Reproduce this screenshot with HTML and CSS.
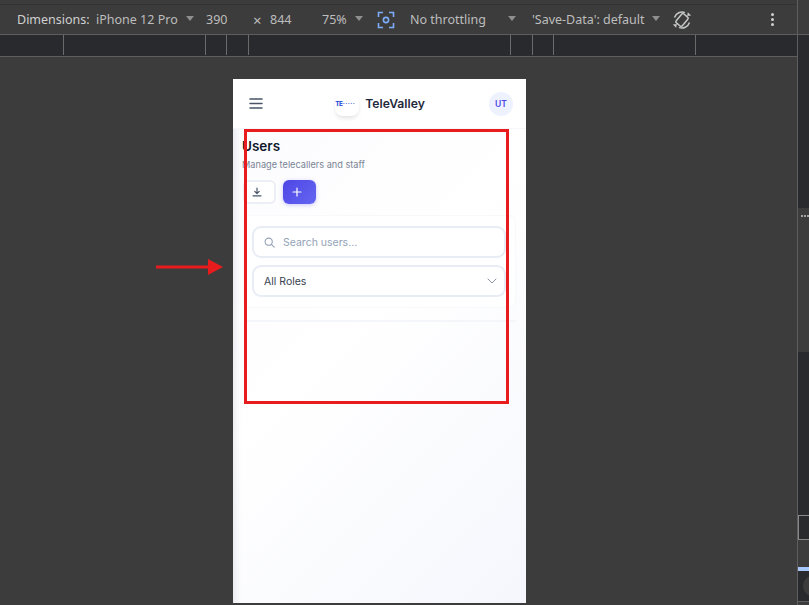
FILE: index.html
```html
<!DOCTYPE html>
<html>
<head>
  <title>Users - TeleValley</title>
  <meta charset="UTF-8">
  <link rel="stylesheet" href="styles.css">
</head>
<body>

<div class="devtools">
  <div class="main-col">
    <div class="top-strip"></div>

    <div class="toolbar">
      <span class="dim-label">Dimensions:</span>
      <span class="device">iPhone 12 Pro</span>
      <i class="caret caret-device"></i>
      <span class="size-w">390</span>
      <span class="size-x">×</span>
      <span class="size-h">844</span>
      <span class="zoom-val">75%</span>
      <i class="caret caret-zoom"></i>
      <svg class="sensor-icon" width="18" height="18" viewBox="0 0 18 18" fill="none" stroke="#7cacf8" stroke-width="1.6">
        <path d="M1.5 6V1.5H6M12 1.5h4.5V6M16.5 12v4.5H12M6 16.5H1.5V12"/>
        <circle cx="9" cy="9" r="2.6"/>
      </svg>
      <span class="throttle">No throttling</span>
      <i class="caret caret-throttle"></i>
      <span class="save-data">'Save-Data': default</span>
      <i class="caret caret-save"></i>
      <svg class="rotate-icon" width="22" height="22" viewBox="0 0 22 22" fill="none" stroke="#c4c7c5">
        <rect x="7" y="5.2" width="8" height="11.6" rx="1.6" transform="rotate(40 11 11)" stroke-width="1.5"/>
        <path d="M3.5 8.5A8 8 0 0 1 14 3.6M18.5 13.5A8 8 0 0 1 8 18.4" stroke-width="1.5"/>
        <path d="M1.8 15.5l3.4 3.2.6-3.8zM20.2 6.5l-3.4-3.2-.6 3.8z" fill="#c4c7c5" stroke="none"/>
      </svg>
      <span class="more-dots"><i></i><i></i><i></i></span>
    </div>

    <div class="ruler">
      <span></span><span></span><span></span><span></span>
      <span></span><span></span><span></span><span></span><span></span>
    </div>

    <div class="canvas">
      <div class="phone">
        <header class="app-header">
          <svg class="menu-icon" width="14" height="11" viewBox="0 0 14 11" fill="none" stroke="#475569" stroke-width="1.5" stroke-linecap="round">
            <path d="M1 1h12M1 5.5h12M1 10h12"/>
          </svg>
          <div class="brand">
            <div class="logo"><span class="logo-mark">TE</span><span class="logo-dots">·····</span></div>
            <span class="brand-name">TeleValley</span>
          </div>
          <div class="avatar">UT</div>
        </header>

        <main class="content">
          <h1>Users</h1>
          <p class="subtitle">Manage telecallers and staff</p>
          <div class="actions">
            <button class="btn btn-light" type="button">
              <svg width="10" height="10" viewBox="0 0 10 10" fill="none" stroke="#475569" stroke-width="1.2" stroke-linecap="round" stroke-linejoin="round">
                <path d="M5 1v5.5M2.8 4.4 5 6.6l2.2-2.2M1 8.8h8"/>
              </svg>
            </button>
            <button class="btn btn-primary" type="button">
              <svg width="10" height="10" viewBox="0 0 10 10" fill="none" stroke="#fff" stroke-width="1.2" stroke-linecap="round">
                <path d="M5 1v8M1 5h8"/>
              </svg>
            </button>
          </div>

          <section class="filter-card">
            <div class="field">
              <svg width="11" height="11" viewBox="0 0 11 11" fill="none" stroke="#94a3b8" stroke-width="1.1" stroke-linecap="round">
                <circle cx="4.7" cy="4.7" r="3.6"/>
                <path d="m7.4 7.4 2.8 2.8"/>
              </svg>
              <span class="placeholder">Search users...</span>
            </div>
            <div class="field field-select">
              <span>All Roles</span>
              <svg width="10" height="6" viewBox="0 0 10 6" fill="none" stroke="#7a8699" stroke-width="0.9" stroke-linecap="round" stroke-linejoin="round">
                <path d="m1 1 4 4 4-4"/>
              </svg>
            </div>
          </section>

          <div class="list-card"></div>
        </main>
      </div>

      <div class="mark-box"></div>
      <svg class="mark-arrow" width="67" height="16" viewBox="0 0 67 16">
        <path d="M0 6.5h52V0l15 8-15 8V9.5H0z" fill="#e81c1c"/>
      </svg>
    </div>
  </div>

  <aside class="side-col">
    <div class="side-head"></div>
    <div class="side-top"></div>
    <div class="side-tabs"><i></i><i></i><i></i></div>
    <div class="side-dark">
      <div class="side-box"></div>
    </div>
    <div class="side-gap"></div>
    <div class="side-foot"><i class="side-circle"></i></div>
  </aside>
</div>

</body>
</html>
```

FILE: styles.css
```css
html, body {
  margin: 0;
  height: 100%;
  overflow: hidden;
  background-color: #3c3c3c;
}

body {
  font-family: "Inter", "Liberation Sans", sans-serif;
}

.devtools {
  display: flex;
  height: 605px;
}

.main-col {
  width: 797px;
  display: flex;
  flex-direction: column;
}

/* toolbar */
.top-strip {
  height: 4px;
  background-color: #3c3c3c;
  border-bottom: 1px solid #333;
}

.toolbar {
  height: 29px;
  display: flex;
  align-items: center;
  padding-left: 17px;
  font-family: "Noto Sans", "Open Sans", sans-serif;
  font-size: 12.5px;
  color: #bdbdbd;
  background-color: #3c3c3c;
  border-bottom: 1px solid #5e5e5e;
  white-space: nowrap;
}

.dim-label { width: 79px; color: #d0d0d0; }
.device { width: 90px; }
.size-w { width: 47px; margin-left: 12px; }
.size-x { width: 17px; font-size: 15px; }
.size-h { width: 52px; }
.zoom-val { width: 33px; }
.throttle { width: 98px; margin-left: 15px; }
.save-data { width: 120px; margin-left: 16px; }

.caret {
  display: block;
  width: 0;
  height: 0;
  border-left: 4.5px solid transparent;
  border-right: 4.5px solid transparent;
  border-top: 5px solid #8f8f8f;
  margin-bottom: 3px;
}

.sensor-icon { margin-left: 14px; }
.rotate-icon { margin-left: 11px; }

.more-dots {
  display: flex;
  flex-direction: column;
  gap: 2px;
  margin-left: 78px;
}

.more-dots i {
  display: block;
  width: 3px;
  height: 3px;
  border-radius: 50%;
  background-color: #d0d0d0;
}

/* ruler */
.ruler {
  height: 21px;
  display: grid;
  grid-template-columns: 64px 142px 21px 22px 262px 22px 21px 142px 1fr;
  background-color: #292a2d;
  border-bottom: 1px solid #5e5e5e;
}

.ruler span {
  border-right: 1px solid #6b6b6b;
  margin-bottom: 1px;
}

.ruler span:last-child { border-right: none; }

/* canvas */
.canvas {
  position: relative;
  flex: 1;
  padding: 22px 0 0 233px;
  background-color: #3c3c3c;
}

.phone {
  width: 293px;
  height: 524px;
  background: linear-gradient(135deg, #fbfbfe 0%, #ffffff 45%, #f6f7fd 100%);
  box-shadow: inset 7px 0 7px -5px rgba(120, 125, 150, 0.18);
  overflow: hidden;
}

.app-header {
  height: 49px;
  display: flex;
  align-items: center;
  justify-content: space-between;
  padding: 0 13px 0 16px;
  background-color: #fff;
  border-bottom: 1px solid #f6f7fa;
}

.brand {
  display: flex;
  align-items: center;
  gap: 6px;
  margin-left: 8px;
}

.logo {
  width: 24px;
  height: 24px;
  display: flex;
  align-items: center;
  border-radius: 8px;
  background-color: #fff;
  box-shadow: 0 3px 4px -1px rgba(15, 23, 42, 0.13);
  overflow: hidden;
  color: #1a3fd8;
}

.logo-mark {
  font-weight: 700;
  font-size: 6.5px;
  line-height: 8px;
  letter-spacing: -0.4px;
}

.logo-dots {
  font-size: 7px;
  line-height: 8px;
  letter-spacing: 0.5px;
}

.brand-name {
  font-size: 12.2px;
  font-weight: 600;
  color: #1e293b;
}

.avatar {
  width: 24px;
  height: 24px;
  display: flex;
  align-items: center;
  justify-content: center;
  border-radius: 50%;
  background-color: #eef2ff;
  color: #4f46e5;
  font-size: 8.5px;
  font-weight: 600;
}

.content {
  padding: 8px 10px 0 10px;
}

h1 {
  margin: 0 0 0 -1px;
  font-size: 13.5px;
  line-height: 18px;
  font-weight: 600;
  color: #0f172a;
}

.subtitle {
  margin: 3px 0 0 -1px;
  font-size: 9.2px;
  line-height: 14px;
  color: #7a8494;
}

.actions {
  display: flex;
  gap: 7px;
  margin-top: 8px;
}

/* icons sit a little left of centre in these buttons */
.btn {
  width: 33px;
  height: 24px;
  padding: 0 5px 0 0;
  display: flex;
  align-items: center;
  justify-content: center;
  border-radius: 6px;
  box-sizing: border-box;
}

.btn-light {
  background-color: #fff;
  border: 2px solid #eceff5;
}

.btn-primary {
  border: none;
  background: linear-gradient(135deg, #4f46e5, #6366f1);
  box-shadow: 0 1px 4px rgba(79, 70, 229, 0.3);
}

.filter-card {
  display: flex;
  flex-direction: column;
  gap: 7px;
  margin-top: 11px;
  padding: 10px 9px 10px 8px;
  background-color: rgba(255, 255, 255, 0.7);
  border: 1px solid #f8f9fb;
  border-radius: 8px;
}

.field {
  height: 32px;
  display: flex;
  align-items: center;
  gap: 8px;
  padding: 0 10px;
  background-color: #fff;
  border: 2px solid #e8ecf5;
  border-radius: 9px;
  box-sizing: border-box;
  font-size: 10.5px;
  color: #374151;
}

.field-select {
  justify-content: space-between;
  padding-right: 7px;
}

.placeholder {
  color: #94a3b8;
}

.list-card {
  height: 90px;
  margin: 12px 0 0 3px;
  border-top: 2px solid #f5f6fa;
}

/* annotations on top of the screenshot */
.mark-box {
  position: absolute;
  left: 244px;
  top: 72px;
  width: 265px;
  height: 275px;
  border: 3px solid #e81c1c;
  box-sizing: border-box;
}

.mark-arrow {
  position: absolute;
  left: 156px;
  top: 202px;
}

/* side panel */
.side-col {
  width: 12px;
  display: flex;
  flex-direction: column;
  border-left: 1px solid #5e5e5e;
  box-sizing: border-box;
}

.side-head {
  height: 34px;
  background-color: #3c3c3c;
  border-bottom: 1px solid #5e5e5e;
}

.side-top {
  height: 173px;
  background-color: #292a2d;
}

.side-tabs {
  height: 144px;
  display: flex;
  gap: 1px;
  padding: 7px 0 0 3px;
  box-sizing: border-box;
  background-color: #3c3c3c;
}

.side-tabs i {
  width: 2px;
  height: 2px;
  border-radius: 50%;
  background-color: #c7c7c7;
}

.side-dark {
  height: 188px;
  background-color: #292a2d;
  display: flex;
  align-items: flex-end;
}

.side-box {
  width: 11px;
  height: 25px;
  border: 1px solid #8a8a8a;
  border-right: none;
  box-sizing: border-box;
  background-color: #292a2d;
}

.side-gap {
  height: 31px;
  background-color: #3c3c3c;
  border-bottom: 4px solid #a8c7fa;
  box-sizing: border-box;
}

.side-foot {
  height: 30px;
  background-color: #292a2d;
  border-bottom: 1px solid #5e5e5e;
  overflow: hidden;
}

.side-circle {
  display: block;
  width: 24px;
  height: 22px;
  margin: 4px 0 0 5px;
  border-radius: 50%;
  background-color: #3c3c3c;
}
```
